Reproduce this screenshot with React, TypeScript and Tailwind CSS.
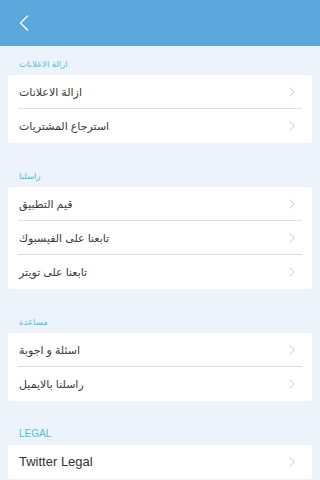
const sections = [
  { title: "ازالة الاعلانات", rows: ["ازالة الاعلانات", "استرجاع المشتريات"] },
  { title: "راسلنا", rows: ["قيم التطبيق", "تابعنا على الفيسبوك", "تابعنا على تويتر"] },
  { title: "مساعدة", rows: ["اسئلة و اجوبة", "راسلنا بالايميل"] },
  { title: "LEGAL", rows: ["Twitter Legal"], latin: true },
];

function Chevron() {
  return (
    <svg width="7" height="10" viewBox="0 0 7 10" fill="none" aria-hidden>
      <path d="M1 1l4.5 4L1 9" stroke="#c8ccd0" strokeWidth="1" strokeLinecap="round" strokeLinejoin="round" />
    </svg>
  );
}

export default function App() {
  return (
    <div className="h-[480px] w-[320px] overflow-hidden bg-[#edf3fb] font-['Liberation_Sans','DejaVu_Sans',sans-serif]">
      <header className="flex h-[46px] items-center bg-[#5ca8dc] pl-[19px]">
        <svg width="10" height="16" viewBox="0 0 10 16" fill="none" aria-hidden>
          <path d="M8.5 1L1.5 8l7 7" stroke="white" strokeWidth="1.3" strokeLinecap="round" strokeLinejoin="round" />
        </svg>
      </header>

      {sections.map((s, i) => (
        <section key={s.title} className={i === 0 ? "" : "mt-[15px]"}>
          <div
            className={
              "flex h-[29px] items-end px-[19px] pb-[5px] leading-[12px] text-[#4cbfd6] " +
              (s.latin ? "text-[10px]" : "text-[8.5px]")
            }
          >
            {s.title}
          </div>
          <div className="mx-2 rounded-[3px] bg-white">
            {s.rows.map((r, j) => (
              <div key={r} className="relative flex h-[34px] items-center justify-between pl-[11px] pr-[16px]">
                <span className={s.latin ? "text-[13px] text-[#333]" : "text-[11px] text-[#3a3a3a]"}>{r}</span>
                <Chevron />
                {j < s.rows.length - 1 && (
                  <div className="absolute bottom-0 left-[10px] right-[10px] h-px bg-[#dcdfe3]" />
                )}
              </div>
            ))}
          </div>
        </section>
      ))}
    </div>
  );
}
